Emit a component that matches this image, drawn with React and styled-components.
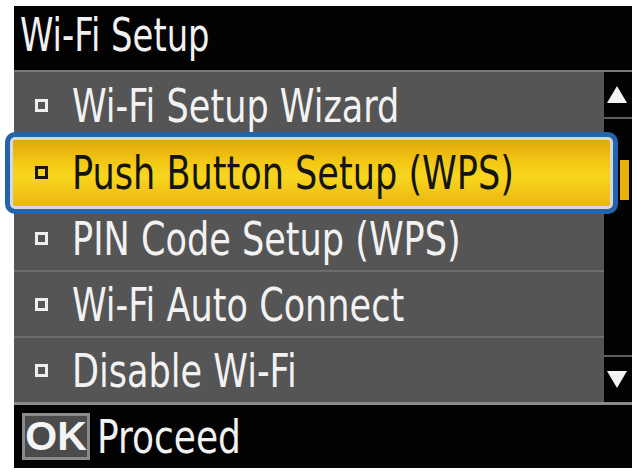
import React from 'react';
import styled, { createGlobalStyle } from 'styled-components';

const GlobalStyle = createGlobalStyle`
  html, body {
    margin: 0;
    padding: 0;
    background: #ffffff;
  }
`;

const Page = styled.div({
  width: '637px',
  height: '473px',
  boxSizing: 'border-box',
  padding: '6px 5px 5px 14px',
  background: '#ffffff',
  overflow: 'hidden',
});

const Screen = styled.div({
  width: '618px',
  height: '462px',
  background: '#030303',
  display: 'flex',
  flexDirection: 'column',
  fontFamily: '"DejaVu Sans Condensed", "DejaVu Sans", sans-serif',
  fontStretch: 'condensed',
});

const Label = styled.span`
  display: inline-block;
  white-space: nowrap;
  font-size: ${(p) => p.$size || 46}px;
  transform: scaleX(${(p) => p.$scale || 0.83});
  transform-origin: left center;
  position: relative;
`;

const TitleBar = styled.div({
  height: '64px',
  boxSizing: 'border-box',
  display: 'flex',
  alignItems: 'center',
  padding: '0 0 7px 6px',
  color: '#f1f1f1',
});

const Body = styled.div({
  display: 'flex',
  borderTop: '2px solid #7a7a7a',
  borderBottom: '3px solid #8a8a8a',
});

const List = styled.div({
  flex: 1,
  display: 'flex',
  flexDirection: 'column',
});

const Row = styled.div`
  height: 66px;
  box-sizing: border-box;
  display: flex;
  align-items: center;
  padding-left: 21px;
  background: #555555;
  color: ${(p) => (p.$active ? '#141414' : '#f2f2f2')};
  & + & {
    border-top: 2px solid #6d6d6d;
  }
  ${(p) =>
    p.$active &&
    `
    position: relative;
    z-index: 1;
    &::before {
      content: '';
      position: absolute;
      top: -8px;
      bottom: -10px;
      left: -9px;
      right: -14px;
      z-index: -1;
      border: 5px solid #2464ad;
      border-radius: 10px;
      box-shadow: inset 0 0 0 3px #d3d9e0;
      background: linear-gradient(#e2a20a 0%, #f3c814 35%, #f8d61e 55%, #eab30e 100%);
    }
  `}
`;

const Bullet = styled.span`
  flex: none;
  width: 13px;
  height: 13px;
  box-sizing: border-box;
  margin-right: 24px;
  border: 3px solid ${(p) => (p.$active ? '#161616' : '#eeeeee')};
  position: relative;
`;

const Scrollbar = styled.div({
  width: '29px',
  display: 'flex',
  flexDirection: 'column',
  background: '#030303',
});

const ArrowCell = styled.div`
  height: 45px;
  display: flex;
  align-items: center;
  justify-content: center;
  padding-right: 2px;
  ${(p) => (p.$down ? 'border-top: 2px solid #5e5e5e;' : 'border-bottom: 2px solid #5e5e5e;')}
`;

const Track = styled.div({
  flex: 1,
  paddingTop: '41px',
  paddingLeft: '16px',
});

const Thumb = styled.div({
  width: '9px',
  height: '40px',
  background: '#e9b208',
});

const Footer = styled.div({
  flex: 1,
  display: 'flex',
  alignItems: 'center',
  paddingLeft: '8px',
  color: '#f1f1f1',
});

const OkKey = styled.div({
  width: '68px',
  height: '47px',
  boxSizing: 'border-box',
  border: '3px solid #8a8a8a',
  background: '#4b4b4b',
  display: 'flex',
  alignItems: 'center',
  justifyContent: 'center',
  marginRight: '7px',
  fontFamily: '"Liberation Sans", Arial, sans-serif',
  fontWeight: 700,
  fontSize: '41px',
  color: '#f4f4f4',
});

function Triangle({ down }) {
  return (
    <svg width="20" height="17" viewBox="0 0 20 17">
      <polygon
        points={down ? '0,0 20,0 10,17' : '10,0 20,17 0,17'}
        fill="#f4f4f4"
      />
    </svg>
  );
}

const items = [
  'Wi-Fi Setup Wizard',
  'Push Button Setup (WPS)',
  'PIN Code Setup (WPS)',
  'Wi-Fi Auto Connect',
  'Disable Wi-Fi',
];

export default function App() {
  const selected = 1;
  return (
    <Page>
      <GlobalStyle />
      <Screen>
        <TitleBar>
          <Label $size={47} $scale={0.8}>Wi-Fi Setup</Label>
        </TitleBar>
        <Body>
          <List>
            {items.map((item, i) => (
              <Row key={item} $active={i === selected}>
                <Bullet $active={i === selected} />
                <Label $size={47}>{item}</Label>
              </Row>
            ))}
          </List>
          <Scrollbar>
            <ArrowCell>
              <Triangle />
            </ArrowCell>
            <Track>
              <Thumb />
            </Track>
            <ArrowCell $down>
              <Triangle down />
            </ArrowCell>
          </Scrollbar>
        </Body>
        <Footer>
          <OkKey>OK</OkKey>
          <Label $size={46} $scale={0.87}>Proceed</Label>
        </Footer>
      </Screen>
    </Page>
  );
}
